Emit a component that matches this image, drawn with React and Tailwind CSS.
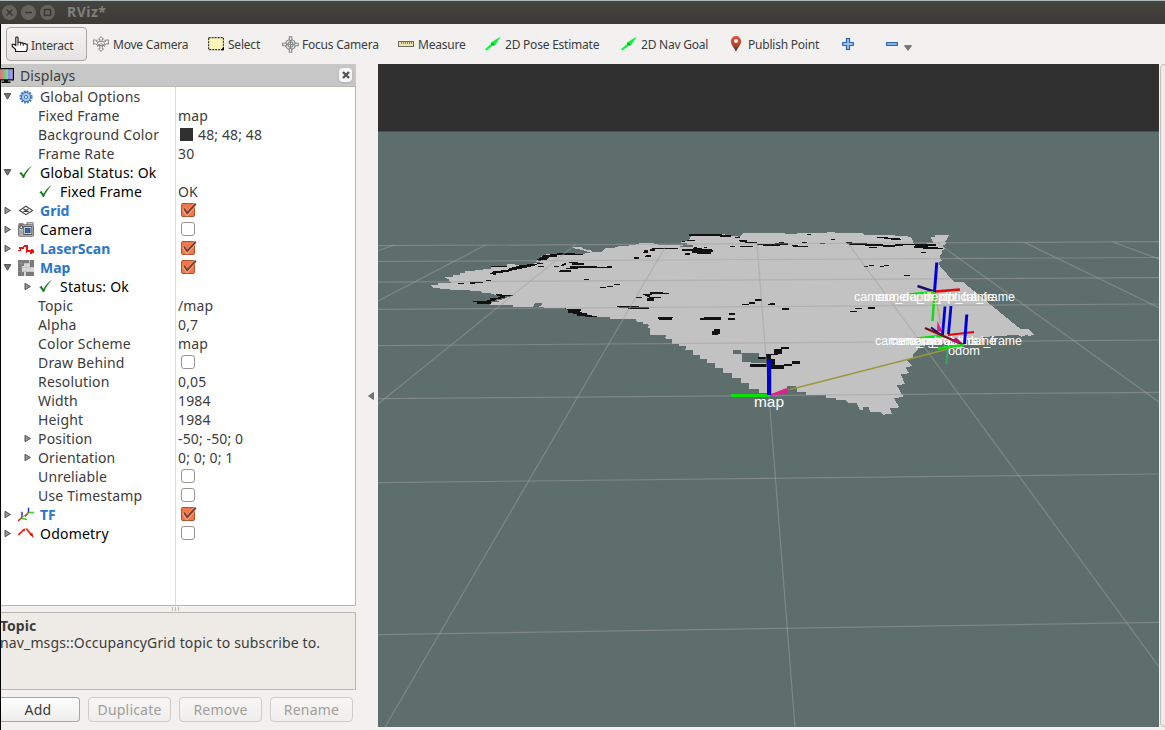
import React from "react";

const Svg = ({ children, w = 16, h = 16, className = "" }) => (
  <svg width={w} height={h} viewBox={`0 0 ${w} ${h}`} className={"shrink-0 " + className}>
    {children}
  </svg>
);

/* ---------- toolbar icons ---------- */
const HandIcon = () => (
  <Svg w={17} h={17}>
    <path
      d="M4.600 15.500v-2.200L1.200 10.500V8.300h2l1.600 1.200V1.800c0-1.100 2.200-1.100 2.200 0v4.400h2.300l.5.700h2l.5.700h2l.6.700h1.300v4.900l-.9 2.300z"
      fill="#fff"
      stroke="#111"
      strokeWidth="1.100"
    />
    <path d="M7 6v3.500M9.600 6.500v3M12.200 7.500v2.500" stroke="#222" strokeWidth="0.900" />
  </Svg>
);
const MoveIcon = () => (
  <Svg>
    <g fill="#f8f8f8" stroke="#777" strokeWidth="0.9">
      <path d="M8 .6l2.500 2.600H9.200v3H6.800v-3H5.500zM8 15.400l2.500-2.600H9.200V9.500H6.800v3.300H5.500z" />
      <path d="M.6 3.800l3.600.6-1 1 3 1.600 3.600 0 3-1.600-1-1 3.600-.6v4.600l-1.500-.800-3.200 2H5.300l-3.200-2-1.500.8z" />
      <ellipse cx="8" cy="7.500" rx="3.600" ry="2.200" />
      <path d="M4 10.500l4-3 4 3" fill="none" />
    </g>
  </Svg>
);
const SelectIcon = () => (
  <Svg>
    <rect x="0.600" y="1.600" width="14.800" height="12" fill="#fdf5b8" stroke="#333" strokeWidth="1.200" strokeDasharray="2 1" />
    <path d="M12.500 14.200l3.500-3.500v3.500z" fill="#000" />
  </Svg>
);
const FocusIcon = () => (
  <Svg w={17} h={17}>
    <g fill="none" stroke="#888" strokeWidth="1.100">
      <circle cx="8.500" cy="8.500" r="5" />
      <circle cx="8.500" cy="8.500" r="2.600" />
      <path d="M7.300 5V.7h2.400V5M7.300 12v4.300h2.400V12M5 7.300H.7v2.400H5M12 7.300h4.300v2.400H12" fill="#eee" />
      <path d="M8.500 4v9M4 8.500h9" />
    </g>
  </Svg>
);
const RulerIcon = () => (
  <Svg>
    <rect x="0.500" y="5.500" width="15" height="5" fill="#eee2b0" stroke="#6f6a5c" />
    <path d="M3.500 6v2M5.500 6v2M7.500 6v2M9.500 6v2M11.500 6v2M13.500 6v2" stroke="#77705c" strokeWidth="0.900" />
  </Svg>
);
const ArrowIcon = () => (
  <Svg>
    <path d="M0 13.200L6.500 7.500 6 6.500 15.800.6 10 9.300 8.600 9 1.500 14.500z" fill="#0cf23a" />
    <path d="M6.300 6.800l3.500 2.200-1 .8-2.600-2z" fill="#0a7a22" />
  </Svg>
);
const PinIcon = () => (
  <Svg>
    <defs>
      <linearGradient id="pin" x1="0" y1="0" x2="0" y2="1">
        <stop offset="0" stopColor="#ef5036" />
        <stop offset="0.600" stopColor="#a9442a" />
        <stop offset="1" stopColor="#3a1d10" />
      </linearGradient>
    </defs>
    <path d="M8 16C7.500 12.500 2.900 9.500 2.900 5.200a5.100 5.100 0 0110.200 0C13.100 9.500 8.500 12.500 8 16z" fill="url(#pin)" />
    <circle cx="8" cy="5" r="2" fill="#fff" />
  </Svg>
);
const PlusIcon = () => (
  <Svg w={12} h={12}>
    <path d="M4.500.7h3v3.800h3.800v3H7.500v3.800h-3V7.500H.7v-3h3.800z" fill="#9fc3ea" stroke="#2f66ad" strokeWidth="1.200" />
  </Svg>
);
const MinusIcon = () => (
  <Svg w={12} h={4}>
    <rect x="0.600" y="0.600" width="10.800" height="2.800" fill="#9fc3ea" stroke="#2f66ad" strokeWidth="1.200" />
  </Svg>
);

/* ---------- tree icons ---------- */
const GearIcon = () => (
  <Svg w={14} h={14}>
    <circle cx="7" cy="7" r="5.600" fill="none" stroke="#3b73b9" strokeWidth="2" strokeDasharray="1.700 1.232" />
    <circle cx="7" cy="7" r="4.600" fill="#a9c8ea" stroke="#3f78bd" strokeWidth="1.100" />
    <circle cx="7" cy="7" r="1.600" fill="#e6effa" stroke="#3f78bd" />
  </Svg>
);
const CheckIcon = () => (
  <Svg>
    <path d="M1.300 8.200L3.400 7l2 3C7.500 6.300 10.300 3 14.200.8 10.700 4 8.200 8 6 12.900H4.800C4 11 2.800 9.300 1.300 8.200z" fill="#1c7a25" />
  </Svg>
);
const GridIcon = () => (
  <Svg>
    <path d="M8 3.200l6.500 4.200L8 11.600 1.500 7.400zM4.700 5.300l6.600 4.200M11.300 5.300L4.700 9.500" fill="none" stroke="#444" strokeWidth="1.100" />
  </Svg>
);
const CameraIcon = () => (
  <Svg>
    <rect x="9" y="0.800" width="6" height="3" fill="#ddd" stroke="#555" strokeWidth="0.800" />
    <rect x="0.600" y="2.800" width="14.800" height="11.400" rx="1" fill="#c9c9c6" stroke="#666" />
    <rect x="0.500" y="1.200" width="5" height="2" fill="#777" />
    <rect x="5.800" y="4.500" width="8" height="8" fill="#f4f4f4" stroke="#555" />
    <rect x="7.500" y="6.200" width="4.600" height="4.600" fill="#3465a4" stroke="#1f4475" strokeWidth="0.800" />
    <circle cx="3.300" cy="5.200" r="1.500" fill="#fff" stroke="#333" />
    <path d="M2 8.500v4M4 8.500v4" stroke="#888" />
  </Svg>
);
const LaserIcon = () => (
  <Svg>
    <path
      d="M0 9h2V8H1V6h4V5h1V4h4v5h3V8h2v1h1v3h-2v1h-2v-2H9v1H8V6H6v2H3v2H0z"
      fill="#f01010"
      shapeRendering="crispEdges"
    />
  </Svg>
);
const MapIcon = () => (
  <Svg>
    <rect width="16" height="16" fill="#dcdcdc" />
    <path d="M0 3.500h16M0 7.500h16M0 11.500h16M4 0v16M8 0v16M12 0v16" stroke="#b8b8b8" strokeWidth="0.600" />
    <path d="M0 0h11v3H6v3H4v6h2v4H0zM12 0h4v7h-4zM8 12h8v4H8z" fill="#7a7a7a" />
    <path d="M0 3.500h6M0 7.500h4M0 11.500h4M3.500 0v16M8 0v3" stroke="#979797" strokeWidth="0.500" />
  </Svg>
);
const TfIcon = () => (
  <Svg>
    <path d="M10.500 6V.8M4 10.500V4.800" stroke="#2222e0" strokeWidth="1.400" />
    <path d="M10.500 5.500H16M4 11.500l5 1" stroke="#1be01b" strokeWidth="1.400" />
    <path d="M4 10.500L0 14M10.500 5.500L7 9.500" stroke="#d82020" strokeWidth="1.400" />
    <path d="M4 10.500l6.500-5" stroke="#a09020" strokeWidth="0.900" />
  </Svg>
);
const OdomIcon = () => (
  <Svg>
    <path d="M.3 9L5.500 4.200" stroke="#f02410" strokeWidth="1.700" />
    <path d="M4.200 3.600l3.300-1.400L6.500 5.400z" fill="#d01a08" />
    <path d="M8.300 2.600l5.500 6.800" stroke="#f02410" strokeWidth="1.700" />
    <path d="M11.600 8.200l2.600-1.800 1.600 5.800z" fill="#d01a08" />
  </Svg>
);
const MonitorIcon = () => (
  <svg width="14" height="16" viewBox="2 0 14 16" className="mt-px -ml-px shrink-0">
    <defs>
      <linearGradient id="scr" x1="0" x2="1">
        <stop offset="0" stopColor="#d07070" />
        <stop offset="0.350" stopColor="#d88c8c" />
        <stop offset="0.360" stopColor="#6cc478" />
        <stop offset="0.660" stopColor="#90d8a0" />
        <stop offset="0.670" stopColor="#8a84e0" />
        <stop offset="1" stopColor="#b0b0f0" />
      </linearGradient>
    </defs>
    <rect x="0.600" y="0.600" width="14.800" height="11.300" fill="url(#scr)" stroke="#000" strokeWidth="1.200" />
    <path d="M6 12h4v1.500h2.500V15h-9v-1.500H6z" fill="#111" />
  </svg>
);

const Twisty = ({ open }) => (
  <Svg w={9} h={9}>
    {open ? (
      <path d="M1.200 1.600h6.600L4.500 7.200z" fill="#777" stroke="#444" strokeWidth="0.900" />
    ) : (
      <path d="M2 1.300v6.400L7.400 4.500z" fill="#999" stroke="#444" strokeWidth="0.900" />
    )}
  </Svg>
);

const CheckBox = ({ on }) => (
  <Svg w={17} h={17}>
    {on ? (
      <>
        <rect x="1.500" y="1.500" width="13" height="13" rx="1.500" fill="#f0794c" stroke="#b4502c" />
        <path d="M3.500 6.500l3.700 5.500L15 2.500" fill="none" stroke="#f7b090" strokeWidth="3.400" />
        <path d="M4 6.500l3.200 4.700L15.800 1.600" fill="none" stroke="#7a3a24" strokeWidth="1.900" />
      </>
    ) : (
      <rect x="1.500" y="1.500" width="13" height="13" rx="2.500" fill="#fff" stroke="#9a9590" />
    )}
  </Svg>
);

const ROWS = [
  { label: "Global Options", arrow: "open", icon: <GearIcon /> },
  { label: "Fixed Frame", sub: true, value: "map" },
  { label: "Background Color", sub: true, value: "48; 48; 48", swatch: true },
  { label: "Frame Rate", sub: true, value: "30" },
  { label: "Global Status: Ok", arrow: "open", icon: <CheckIcon />, tone: "black" },
  { label: "Fixed Frame", sub: true, icon: <CheckIcon />, tone: "black", value: "OK" },
  { label: "Grid", arrow: "closed", icon: <GridIcon />, tone: "blue", check: true },
  { label: "Camera", arrow: "closed", icon: <CameraIcon />, tone: "black", check: false },
  { label: "LaserScan", arrow: "closed", icon: <LaserIcon />, tone: "blue", check: true },
  { label: "Map", arrow: "open", icon: <MapIcon />, tone: "blue", check: true },
  { label: "Status: Ok", sub: true, arrow: "closed", icon: <CheckIcon />, tone: "black" },
  { label: "Topic", sub: true, value: "/map" },
  { label: "Alpha", sub: true, value: "0,7" },
  { label: "Color Scheme", sub: true, value: "map" },
  { label: "Draw Behind", sub: true, check: false },
  { label: "Resolution", sub: true, value: "0,05" },
  { label: "Width", sub: true, value: "1984" },
  { label: "Height", sub: true, value: "1984" },
  { label: "Position", sub: true, arrow: "closed", value: "-50; -50; 0" },
  { label: "Orientation", sub: true, arrow: "closed", value: "0; 0; 0; 1" },
  { label: "Unreliable", sub: true, check: false },
  { label: "Use Timestamp", sub: true, check: false },
  { label: "TF", arrow: "closed", icon: <TfIcon />, tone: "blue", check: true },
  { label: "Odometry", arrow: "closed", icon: <OdomIcon />, tone: "black", check: false },
];

const TONES = {
  black: "text-black tracking-[0.22px]",
  blue: "text-[#2a76c6] font-bold",
};

const Row = ({ row }) => (
  <div className="flex h-[19px] items-center">
    <div className={"flex h-full w-[174px] shrink-0 items-center " + (row.sub ? "pl-[22px]" : "pl-[2px]")}>
      <span className="flex w-[15px] shrink-0">{row.arrow && <Twisty open={row.arrow === "open"} />}</span>
      {row.icon && <span className="mr-[6px] flex w-[16px] shrink-0 justify-center">{row.icon}</span>}
      <span className={"whitespace-nowrap " + (TONES[row.tone] || "text-[#3c3c3c] tracking-[0.17px]")}>{row.label}</span>
    </div>
    <div className="flex h-full flex-1 items-center border-l border-[#dcdcdc] pl-[2px] tracking-[0.12px] text-[#3c3c3c]">
      {row.swatch && <span className="mr-[5px] ml-[2px] h-[13px] w-[13px] bg-[#303030]" />}
      {row.value && <span className="whitespace-nowrap">{row.value}</span>}
      {row.check !== undefined && (
        <span className="ml-[1.500px] -mt-px flex">
          <CheckBox on={row.check} />
        </span>
      )}
    </div>
  </div>
);

const TOOLS = [
  { label: "Move Camera", icon: <MoveIcon />, w: "w-[115px]" },
  { label: "Select", icon: <SelectIcon />, w: "w-[74px]" },
  { label: "Focus Camera", icon: <FocusIcon />, w: "w-[116px]" },
  { label: "Measure", icon: <RulerIcon />, w: "w-[87px]" },
  { label: "2D Pose Estimate", icon: <ArrowIcon />, w: "w-[136px]" },
  { label: "2D Nav Goal", icon: <ArrowIcon />, w: "w-[107px]" },
  { label: "Publish Point", icon: <PinIcon />, w: "w-[114px]" },
];

const Ctl = ({ children }) => (
  <span className="flex h-[15px] w-[15px] items-center justify-center rounded-full bg-[#65635e]">
    <svg width="9" height="9" viewBox="0 0 9 9" fill="none" stroke="#35342f" strokeWidth="1.300">
      {children}
    </svg>
  </span>
);

/* ---------- 3D scene ---------- */
const GRID = [
  [378, 245.700, 1159, 241.700],
  [378, 261.500, 1159, 257.500],
  [378, 282.200, 1159, 277.600],
  [378, 309.300, 1159, 304],
  [378, 345.700, 1159, 340],
  [378, 398.700, 1159, 392.300],
  [378, 482.700, 1159, 474],
  [378, 634.700, 1159, 622.300],
  [394, 245, 378, 251],
  [485.600, 245, 378, 301],
  [575.500, 244.500, 378, 404],
  [666.700, 244.500, 385, 727],
  [757, 243.800, 795, 727],
  [847.700, 242.800, 1159, 666.700],
  [937, 242.500, 1159, 402],
  [1024.300, 242.300, 1159, 307.700],
  [1112.700, 242, 1159, 259],
];

const Scene = () => (
  <svg width="781" height="663" viewBox="378 64 781 663" className="block">
    <rect x="378" y="64" width="781" height="663" fill="#5e6e6c" />
    <rect x="378" y="64" width="781" height="67.500" fill="#303030" />
    <g fill="#c2c2c2" shapeRendering="crispEdges">
      <path
        transform="translate(420 220) scale(.33333)"
        d="M33 196H55V190H95L88 184V178H116L75 175V172H100V166H120V160H134V154H165V151H190V147H213V138H262V133H285V136H320L345 130H370L345 124 360 118 365 108 380 103 430 101H490L515 99 500 94 485 90 460 84 456 80H480L495 88 515 92V96H545L555 86 550 84H580L595 79 645 75 660 70H700L715 74 780 76H815V389H796L798 377H778V371H757V356L736 354 738 344 718 342 720 334 702 331V324H682L688 314 668 312V306H650L648 297H570V291H530L500 282 445 268 430 264 352 262 366 255 365 249H345L340 258V260H280V256H208L210 250 225 243 250 238 270 229 225 225 210 220 185 218 180 213 140 211 80 208 40 203Z"
      />
      <path
        transform="translate(660 220) scale(.33333)"
        d="M-30 75H60L64 66 85 62 92 50 85 42H190L215 48 238 50 250 40H320V38H375V43H412V40H500V36H525V40H610V570H600L590 550H565L558 540H528V533H498V525H438V516H412L408 498H380V510L330 524 318 518H298V508H268V490H243V474H216V460H190V444H166V430H142V418H120V405H98V390H78V378H57V370H36V357H18V346H-30Z"
      />
      <path
        transform="translate(840 220) scale(.33333)"
        d="M-5 40H60L75 44H130L210 50 215 56 222 71H262V68H280L275 58 272 50H285V45H327L322 56 316 64 318 70 308 78 315 86 305 92 308 100 300 108V114L305 122 295 128 300 140 345 187H370L540 326H565L583 344 567 348 558 345 545 350 530 344 497 347 440 350 400 356 300 372 240 378 232 390 218 405 222 415 200 420 218 437 198 443 207 460 182 462 195 492 170 496 190 530 162 535 178 562 150 565 156 582 128 584 122 575H90L85 560H58L55 545H22L18 535H-5Z"
      />
    </g>
    <g fill="#5e6e6c" shapeRendering="crispEdges" transform="translate(660 220) scale(.33333)">
      <path d="M218 389H243V400H296V412H316L318 430H272V425H245V402H220ZM72 76H100V82H60V79ZM60 70H80V74H60Z" />
    </g>
    <g fill="#5e6e6c" shapeRendering="crispEdges" transform="translate(420 220) scale(.33333)">
      <path d="M216 243h20v3h-20z" />
    </g>
    <g fill="#111" shapeRendering="crispEdges">
      <path
        transform="translate(420 220) scale(.33333)"
        d="M213 137H262V141H213ZM208 163L220 153H242V150H262L270 144 300 136 345 131H368V128H350V135L325 142 300 147 272 152 262 156H248V160H228V164ZM346 121L362 112 372 105 410 102V99H466V102H488V105H410V110L384 113V118L360 122ZM355 137H372V141H355ZM402 137H417V141H402ZM425 133L438 129V135L424 138ZM447 126H475V130H491V134H455V130H447ZM420 150H452V155H418ZM438 144H455V148H438ZM450 139H530V141H560V138H576V143H530L470 144 450 143ZM456 143H475V147H456ZM114 189H132V192H114ZM151 186H190V190H165V192H151ZM198 180H213V183H198ZM492 177H507V180H492ZM540 200H560V198H578V202H558V204H540ZM582 192H600V195H582ZM228 221H246V225H278V228H256V234H244V238H228L222 243H212V251H172V247L160 246V243H200V239H210V235H232L240 229L228 226ZM430 264L448 267H484V272L478 276 500 280V285H515V288H530V291H510L472 287V282H458V278H445V270ZM591 259H650L688 262V266H630L610 264 591 262ZM648 231H666V234H648ZM669 223H690V217H730V219H747V222H700L690 226V232H723V235H702V242H682V235H690L680 229ZM714 291H759V295H756V300H716ZM642 111H657V117H642ZM670 96L675 89H685V93L682 99H670ZM678 105H692V110H675ZM690 86L718 84H775V87H740V88H705V94H690Z"
      />
      <path
        transform="translate(660 220) scale(.33333)"
        d="M86 43H187V46H213V50H190L150 48H86ZM225 50H240V53H225ZM80 60H105V62H80ZM66 64H75V67H66ZM0 84H54V88H0ZM68 86H100V83H125V86H155V89H160V95H152V101H110V98H95V93H66ZM76 100H90V105H76ZM237 61H260V65H290V69H262L237 64ZM210 78H225V82H210ZM240 78H280V81H240ZM292 72H345V69H385V74H360V77H310V76H292ZM358 65H372V68H358ZM395 74H415V77H445V81H400ZM425 67H440V69H425ZM440 42H453V45H440ZM513 57H525V60H513ZM480 69H495V72H480ZM560 67H575V71H600V75H570ZM102 83H112V81H102ZM132 83H140V80H132ZM0 216H10V218H27V222H0ZM-2 291H39V295H36V300H0ZM246 251H267V247H285V251H267V255H246ZM285 237H306V243H285ZM324 251H330V249H345V254H324ZM366 264H387V270H366ZM207 279H225V285H207ZM204 294H225V300H204ZM120 294H132V291H183V299H120ZM156 333H163V327H180V343H174V346H156ZM363 381H387V387H363ZM342 387H366V402H354V406H332V418H345V434H372V446H333V440H270V431H318V416H294V411H318V402H342ZM372 433H396V424H420V432H396V438H372ZM570 273H591V276H570ZM585 264H600V267H585ZM320 486H332V506H320Z"
      />
      <path
        transform="translate(840 220) scale(.33333)"
        d="M18 66H33V70H80V73H130V76H165V72H200V71H230V73H288V77H225L220 75H190V78H165V80H130V77H75V76H28V71H20ZM110 50H145V54H165V57H183V60H160L140 56 110 54ZM165 54H180V56H165ZM87 80H110V83H87ZM222 79H265V81H295V84H308V88H288V86H250V84H222ZM243 95H258V99H243ZM72 137H88V134H102V138H85V140H72ZM120 137H133V134H147V138H133V140H120ZM192 165H210V168H192ZM30 272H50V276H30ZM48 264H66V267H48ZM84 261H105V267H84Z"
      />
    </g>
    <g stroke="#a0a0a4" strokeOpacity="0.5" strokeWidth="1.200">
      {GRID.map(([x1, y1, x2, y2], i) => (
        <line key={i} x1={x1} y1={y1} x2={x2} y2={y2} />
      ))}
    </g>
    <g fill="none">
      <path d="M964 345L790 389.500" stroke="#99983a" strokeWidth="1.300" />
      <path d="M935.500 294l5 30" stroke="#b5ad5a" strokeWidth="1.300" />
      <path d="M937.500 321l5 11-5.500-1z" fill="#e0208a" />
      <path d="M770 395l16.500-6.500v4.500z" fill="#e0208a" stroke="#e0208a" strokeWidth="1" />
      <path d="M731 395.500H769" stroke="#0be00b" strokeWidth="3" />
      <path d="M769 395V359" stroke="#0000dc" strokeWidth="4" />
      <path d="M770.800 395V359" stroke="#00008c" strokeWidth="0.800" />
      <path d="M934.500 292L932.500 321" stroke="#19d819" strokeWidth="2.500" />
      <path d="M947.500 349L946.500 364" stroke="#3fa35c" strokeWidth="2" />
      <path d="M934 291.500L917.500 286" stroke="#20106a" strokeWidth="2.500" />
      <path d="M935 291.500L960 289.500" stroke="#dc0a0a" strokeWidth="2.500" />
      <path d="M934 292L908.500 294.500" stroke="#0ae00a" strokeWidth="2.500" />
      <path d="M934.500 292L936.800 262.500" stroke="#0000dc" strokeWidth="3" />
      <path d="M942 335.500L931 327.500" stroke="#10106a" strokeWidth="2" />
      <path d="M948 335L974 332" stroke="#dc0a0a" strokeWidth="2.200" />
      <path d="M944 335.500L917 338.500" stroke="#0ae00a" strokeWidth="2.500" />
      <path d="M942.500 335L945 306.500M948.500 334L951 306" stroke="#0000dc" strokeWidth="2.800" />
    </g>
    <g fill="#fff" fontFamily="'Liberation Sans', Arial, sans-serif" fontSize="12" textAnchor="middle">
      <text x="934.500" y="301" textLength="161" lengthAdjust="spacingAndGlyphs">camera_depth_optical_frame</text>
      <text x="935" y="301" textLength="119" lengthAdjust="spacingAndGlyphs">camera_depth_frame</text>
      <text x="948.500" y="344.500" textLength="147" lengthAdjust="spacingAndGlyphs">camera_rgb_optical_frame</text>
      <text x="943" y="344.500" textLength="106" lengthAdjust="spacingAndGlyphs">camera_rgb_frame</text>
      <text x="943" y="344.500" textLength="68" lengthAdjust="spacingAndGlyphs">camera_link</text>
      <text x="964" y="354.500" fontSize="12.500" textLength="32" lengthAdjust="spacingAndGlyphs">odom</text>
      <text x="769" y="407" fontSize="15" textLength="30" lengthAdjust="spacingAndGlyphs">map</text>
    </g>
    <g fill="none">
      <path d="M964 345L925 328" stroke="#780f14" strokeWidth="2.200" />
      <path d="M951 341l5-3.500 8 7z" fill="#b01068" />
      <path d="M964 345L938 348.500" stroke="#0ae00a" strokeWidth="2.500" />
      <path d="M964.500 344L966.800 314.500" stroke="#0000dc" strokeWidth="3" />
    </g>
  </svg>
);

const PanelButton = ({ children, enabled, className }) => (
  <button
    className={
      "h-[25px] border bg-gradient-to-b text-center leading-none tracking-[0.2px] " +
      (enabled
        ? "rounded-r-[4px] border-l-0 border-[#aaa69f] from-white to-[#eeedeb] text-[#3c3c3c] "
        : "rounded-[4px] border-[#cfccc8] from-[#f8f7f6] to-[#efeeec] text-[#a09e9b] ") +
      className
    }
  >
    {children}
  </button>
);

export default function App() {
  return (
    <div className="flex h-[730px] w-[1165px] flex-col overflow-hidden bg-[#f2f1f0] font-['Noto_Sans','Open_Sans',sans-serif] text-[14px] text-[#3c3c3c]">
      <header className="flex h-[24px] shrink-0 items-center gap-[4px] border-t border-[#aeb9bc] bg-gradient-to-b from-[#454440] to-[#3b3a36] pl-[2px]">
        <Ctl>
          <path d="M1.500 1.500l6 6M7.500 1.500l-6 6" />
        </Ctl>
        <Ctl>
          <path d="M1 4.500h7" />
        </Ctl>
        <Ctl>
          <rect x="1.500" y="1.500" width="6" height="6" />
        </Ctl>
        <span className="ml-[8px] -mt-[3px] text-[14px] font-bold tracking-[0.500px] text-[#817f79]">RViz*</span>
      </header>

      <div className="flex min-h-0 flex-1 border-l border-black">
        <div className="flex w-full flex-col">
          <nav className="flex h-[40px] shrink-0 items-center pl-[5px] text-[12px] tracking-[-0.220px]">
            <div className="mr-[6px] flex h-[34px] w-[81px] items-center gap-[3px] rounded-[4px] border border-[#aaa6a1] bg-gradient-to-b from-[#f4f3f2] to-[#e6e4e2] pl-[4px]">
              <HandIcon />
              <span className="pt-[3px]">Interact</span>
            </div>
            {TOOLS.map((t) => (
              <div key={t.label} className={"flex shrink-0 items-center gap-[4px] whitespace-nowrap " + t.w}>
                <span className="flex w-[16px] justify-center">{t.icon}</span>
                <span className="pt-[2px]">{t.label}</span>
              </div>
            ))}
            <PlusIcon />
            <span className="ml-[32px] flex">
              <MinusIcon />
            </span>
            <svg width="8" height="6" viewBox="0 0 8 6" className="mt-[7px] ml-[6px]">
              <path d="M.4.600h7.200L4 5.400z" fill="#777" stroke="#555" strokeWidth="0.600" />
            </svg>
          </nav>

          <div className="flex min-h-0 flex-1">
            <aside className="flex w-[355px] shrink-0 flex-col">
              <div className="flex h-[23px] shrink-0 items-center border-b border-[#bab6b0] bg-[#c7c7c7]">
                <MonitorIcon />
                <span className="ml-[6px] flex-1 tracking-[0.1px]">Displays</span>
                <span className="mr-[4px] flex h-[14px] w-[13px] items-center justify-center rounded-[4px] bg-[#f6f6f6] shadow-sm">
                  <svg width="8" height="8" viewBox="0 0 8 8">
                    <path d="M1 1l6 6M7 1L1 7" stroke="#555" strokeWidth="2.400" />
                  </svg>
                </span>
              </div>
              <div className="flex h-[519px] shrink-0 flex-col border-r border-b border-[#bab6b0] bg-white">
                {ROWS.map((r, i) => (
                  <Row key={i} row={r} />
                ))}
                <div className="ml-[174px] flex-1 border-l border-[#dcdcdc]" />
              </div>
              <div className="flex h-[6px] shrink-0 items-center justify-center gap-[2px] pr-[6px]">
                <span className="h-[4px] w-px bg-[#bbb8b3]" />
                <span className="h-[4px] w-px bg-[#bbb8b3]" />
                <span className="h-[4px] w-px bg-[#bbb8b3]" />
              </div>
              <div className="h-[78px] shrink-0 overflow-hidden border border-l-0 border-[#bab6b0] bg-[#eeebe7] pt-[4px] leading-[17px]">
                <div className="-ml-px font-bold">Topic</div>
                <div className="-ml-px whitespace-nowrap tracking-[0.140px]">nav_msgs::OccupancyGrid topic to subscribe to.</div>
              </div>
              <div className="mt-[7px] flex gap-[8px]">
                <PanelButton enabled className="w-[79px] pr-[4px]">Add</PanelButton>
                <PanelButton className="w-[83px]">Duplicate</PanelButton>
                <PanelButton className="w-[83px]">Remove</PanelButton>
                <PanelButton className="w-[83px]">Rename</PanelButton>
              </div>
            </aside>
            <div className="flex w-[22px] shrink-0 items-center justify-center pb-[3px] pl-[7px]">
              <svg width="6" height="8" viewBox="0 0 6 8">
                <path d="M5.500.4v7.200L.5 4z" fill="#777" stroke="#444" strokeWidth="0.600" />
              </svg>
            </div>
            <main className="h-[663px] w-[781px] shrink-0">
              <Scene />
            </main>
            <div className="ml-px h-[663px] w-[12px] shrink-0 rounded-l-[4px] border border-[#c4bcb5] bg-[#eeebe8]" />
          </div>
        </div>
      </div>
    </div>
  );
}
